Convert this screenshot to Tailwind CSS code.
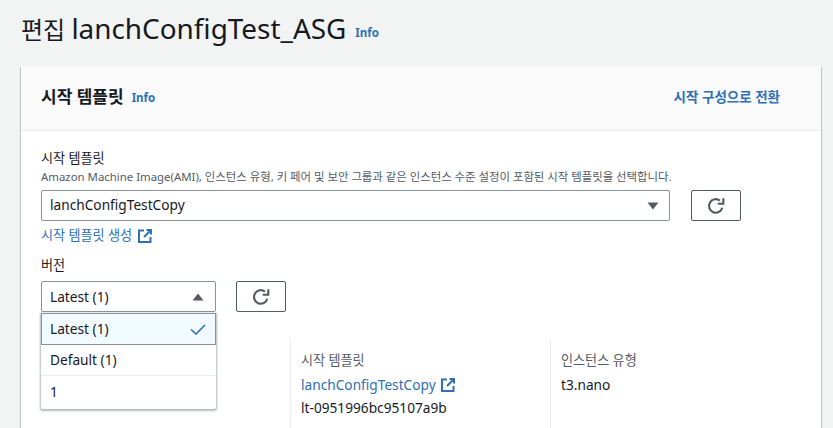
<!DOCTYPE html>
<html lang="ko">
<head>
<meta charset="utf-8">
<script src="https://cdn.jsdelivr.net/npm/@tailwindcss/browser@4"></script>
</head>
<body class="bg-[#f2f3f3] text-[#16191f] font-['Noto_Sans','Noto_Sans_CJK_KR',sans-serif]">
<div class="w-[833px] h-[428px] overflow-hidden pl-[21px]">
  <div class="h-[66px] flex items-start pt-[10px]">
    <h1 class="text-[24px] leading-[36px] font-normal">편집 <span class="text-[27.9px]">lanchConfigTest_ASG</span></h1>
    <a class="ml-[9px] mt-[15px] text-[11.5px] leading-[16px] font-bold text-[#2e6fb7]">Info</a>
  </div>
  <section class="w-[800px] h-[370px] bg-white shadow-[0_1px_1px_0_rgba(0,28,36,0.3),1px_1px_1px_0_rgba(0,28,36,0.15),-1px_1px_1px_0_rgba(0,28,36,0.15)]">
    <header class="h-[65px] bg-[#fafafa] border-b border-[#eaeded] flex items-center justify-between pl-[20px] pr-[41px] pb-[2px]">
      <div class="flex items-center">
        <h2 class="text-[17px] leading-[22px] font-bold">시작 템플릿</h2>
        <a class="ml-[8px] mt-[2px] text-[11.5px] leading-[16px] font-bold text-[#2e6fb7]">Info</a>
      </div>
      <a class="text-[13.5px] leading-[18px] font-bold text-[#2e6fb7]">시작 구성으로 전환</a>
    </header>
    <div class="pl-[20px] pt-[17px]">
      <div class="text-[13.1px] leading-[20px]">시작 템플릿</div>
      <div class="text-[11.4px] leading-[16px] text-[#545b64] mt-[1px] whitespace-nowrap">Amazon Machine Image(AMI), 인스턴스 유형, 키 페어 및 보안 그룹과 같은 인스턴스 수준 설정이 포함된 시작 템플릿을 선택합니다.</div>
      <div class="flex gap-[21px] mt-[5px]">
        <div class="w-[629px] h-[31px] border border-[#879596] rounded-[2px] flex items-center justify-between pl-[8px] pr-[10px] text-[13.7px]">
          <span>lanchConfigTestCopy</span>
          <svg width="12" height="8" viewBox="0 0 12 8"><path d="M0.5 0.5h11L6 7.5z" fill="#545b64"/></svg>
        </div>
        <button class="w-[50px] h-[31px] border border-[#545b64] rounded-[2px] flex items-center justify-center bg-white">
          <svg width="18" height="18" viewBox="0 0 16 16" fill="none" stroke="#545b64" stroke-width="1.9"><path d="M13.6 9.5A6 6 0 1 1 11.5 3.2"/><path d="M14.5 1v5h-5"/></svg>
        </button>
      </div>
      <a class="flex items-center gap-[6px] mt-[5px] h-[20px] text-[13.1px] text-[#2e6fb7]">
        <span>시작 템플릿 생성</span>
        <svg width="14" height="14" viewBox="0 0 14 14" fill="none" stroke="#2e6fb7" stroke-width="2"><path d="M6 1.500H1v11.500h11.500V8"/><path d="M8.500 1h4.500v4.500M13 1L6 8"/></svg>
      </a>
      <div class="text-[13.1px] leading-[20px] mt-[9px]">버전</div>
      <div class="relative flex gap-[20px] mt-[6px]">
        <div class="w-[175px] h-[31px] border border-[#879596] rounded-[2px] flex items-center justify-between pl-[8px] pr-[11px] pt-[1px] text-[13.7px]">
          <span>Latest (1)</span>
          <svg width="12" height="8" viewBox="0 0 12 8"><path d="M0.500 7.500h11L6 0.500z" fill="#545b64"/></svg>
        </div>
        <button class="w-[50px] h-[31px] border border-[#545b64] rounded-[2px] flex items-center justify-center bg-white">
          <svg width="18" height="18" viewBox="0 0 16 16" fill="none" stroke="#545b64" stroke-width="1.900"><path d="M13.600 9.500A6 6 0 1 1 11.500 3.200"/><path d="M14.500 1v5h-5"/></svg>
        </button>
        <ul class="absolute left-0 top-[32px] z-10 w-[175px] h-[96px] bg-white rounded-b-[2px] shadow-[0_1px_2px_1px_rgba(0,28,36,0.3)] text-[13.7px]">
          <li class="h-[32px] bg-[#f1faff] border border-[#879596] flex items-center justify-between pl-[8px] pr-[9px]">
            <span>Latest (1)</span>
            <svg width="16" height="11" viewBox="0 0 16 11" fill="none" stroke="#2e6fb7" stroke-width="1.600"><path d="M1 5.500l5 4.500L15 1"/></svg>
          </li>
          <li class="h-[31px] border-b border-[#eaeded] flex items-center pl-[9px]">Default (1)</li>
          <li class="h-[33px] flex items-center pl-[9px]">1</li>
        </ul>
      </div>
      <div class="flex mt-[28px] h-[100px] ml-[249px]">
        <div class="w-[260px] border-l border-[#eaeded] pl-[10px] text-[13.7px]">
          <div class="text-[13.1px] leading-[20px] text-[#545b64] mt-[10px]">시작 템플릿</div>
          <a class="flex items-center gap-[5px] leading-[20px] mt-[5px] text-[#2e6fb7]">
            <span>lanchConfigTestCopy</span>
            <svg width="14" height="14" viewBox="0 0 14 14" fill="none" stroke="#2e6fb7" stroke-width="2"><path d="M6 1.500H1v11.500h11.500V8"/><path d="M8.500 1h4.500v4.500M13 1L6 8"/></svg>
          </a>
          <div class="leading-[20px] mt-[3px]">lt-0951996bc95107a9b</div>
        </div>
        <div class="flex-1 border-l border-[#eaeded] pl-[10px] text-[13.7px]">
          <div class="text-[13.1px] leading-[20px] text-[#545b64] mt-[10px]">인스턴스 유형</div>
          <div class="leading-[20px] mt-[5px]">t3.nano</div>
        </div>
      </div>
    </div>
  </section>
</div>
</body>
</html>
